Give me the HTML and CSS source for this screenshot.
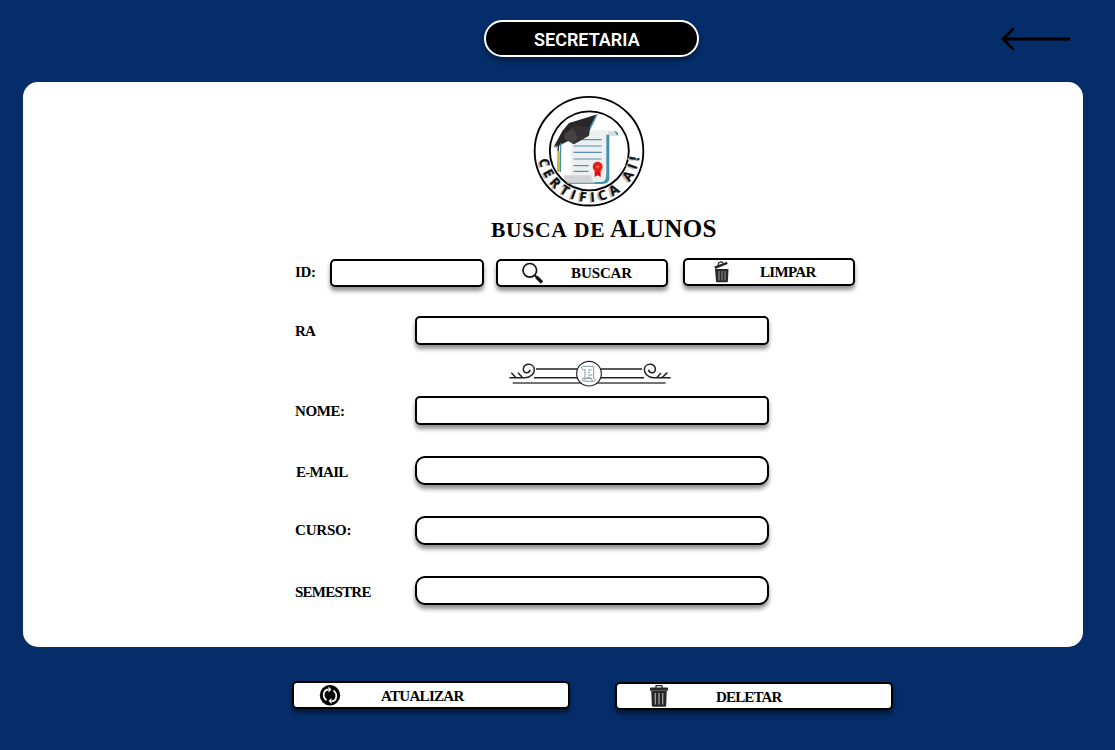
FILE: index.html
```html
<!DOCTYPE html>
<html lang="pt-BR">
<head>
<meta charset="utf-8">
<title>Secretaria - Busca de Alunos</title>
<link rel="stylesheet" href="styles.css">
</head>
<body>
<header class="topbar">
  <div class="pill">SECRETARIA</div>
  <a class="back" aria-label="Voltar"><svg width="70" height="24" viewBox="0 0 70 24"><path d="M69 12H2M12.500 1.500 2 12l10.500 10.500" fill="none" stroke="#000" stroke-width="2.800"/></svg></a>
</header>
<main class="card">
  <svg class="logo" width="130" height="122" viewBox="0 0 390 366">
    <defs><path id="arc" d="M43 184A152 152 0 0 0 347 184"/></defs>
    <circle cx="195" cy="183.500" r="163" fill="#fff" stroke="#000" stroke-width="5.500"/>
    <circle cx="196" cy="182.500" r="118.500" fill="#fff" stroke="#000" stroke-width="5.500"/>
    <path d="M242 124h32q9 2 9 12h-27v130q-2 15-20 15h-25V124z" fill="#4292ac"/>
    <path d="M141 140 160 121h98q16 2 20 13h-31v117q0 25-14 25h-84l-8-18z" fill="#edf0f1"/>
    <path d="M252 124q21 0 26 10h-26z" fill="#d3dde1"/>
    <path d="M119 256h83q-1 19 12 23h-80q-14-3-15-23z" fill="#d2d4d6"/>
    <path d="M130 280h105q14-3 17-17" fill="none" stroke="#4292ac" stroke-width="3"/>
    <path d="M149 149h84M149 168h84M149 187h84M149 207h84M149 227h45M149 244h45" stroke="#5b8eae" stroke-width="3.500"/>
    <path d="M212 238v23l9-5 9 5v-23z" fill="#e00f12"/>
    <circle cx="221" cy="230" r="15" fill="#f1201b"/>
    <circle cx="221" cy="230" r="7.500" fill="#ef5040" stroke="#a90b10" stroke-width="2"/>
    <path d="M92 175 130 106 222 72 198 121z" fill="#4292ac"/>
    <path d="M89 171 115 123 135 99 216 74 194 118 120 158z" fill="#292627"/>
    <path d="m119 132 36-27 43 9-3 23-45 26-27-16z" fill="#343132"/>
    <path d="m121 134 24-19 17 26-15 20-24-14z" fill="#454243"/>
    <path d="m110 160-1 86" stroke="#4292ac" stroke-width="4"/>
    <path d="m104 160-2 24" stroke="#292627" stroke-width="4"/>
    <path d="M100 184h7l1 61h-9z" fill="#c7b64c"/>
    <text class="ring ring-shadow"><textPath href="#arc" startOffset="25" textLength="434">CERTIFICA AI!</textPath></text>
    <text class="ring"><textPath href="#arc" startOffset="25" textLength="434">CERTIFICA AI!</textPath></text>
  </svg>
  <h1 class="title"><span class="small">BUSCA</span><span class="small de">DE</span><span>ALUNOS</span></h1>
  <form class="form">
    <div class="search">
      <label class="label id">ID:</label>
      <input class="field id-field" aria-label="ID">
      <button class="btn find" type="button">
        <svg width="24" height="24" viewBox="0 0 24 24"><circle cx="8.800" cy="9.300" r="6.800" fill="none" stroke="#111" stroke-width="1.700"/><path d="m13.500 14 2.500 2.500" stroke="#111" stroke-width="2"/><path d="m15.500 16 5.500 5.500" stroke="#111" stroke-width="3.400"/></svg>
        <span class="t-buscar">BUSCAR</span>
      </button>
      <button class="btn clear" type="button">
        <svg width="16" height="22" viewBox="0 0 16 22"><path d="M1 8h13.500l-.6 12.300q-.1 1-1 1H3q-.9 0-1-1z" fill="#292929"/><path d="m.8 6.700 12.500-4.800" stroke="#292929" stroke-width="2.600"/><path d="m4 4.500.6-2.600 3-1.200 1.600 1.700" fill="none" stroke="#292929" stroke-width="1.200"/><path d="M5 10v9.500M8 10v9.500M11 10v9.500" stroke="#aaa" stroke-width=".9"/></svg>
        <span class="t-limpar">LIMPAR</span>
      </button>
    </div>
    <div class="row ra"><label class="label">RA</label><input class="field" aria-label="RA"></div>
    <svg class="divider" width="180" height="40" viewBox="0 0 540 120">
      <g fill="none" stroke="#222" stroke-width="4.500">
        <path d="M108 51h124M302 51h124M102 77h130M302 77h130"/>
        <path d="M28 77h47c18 0 28-13 28-24 0-21-33-21-33-2 0 15 19 14 20 2M48 77 34 62M68 77 54 62"/>
        <path d="M512 77h-51c-18 0-28-13-28-24 0-21 33-21 33-2 0 15-19 14-20 2M470 77l13-14M486 77l16-15"/>
        <path d="M38 93h459" stroke="#444"/>
        <circle cx="267" cy="65" r="37" fill="#fff" stroke-width="3.500"/>
      </g>
      <g fill="none" stroke="#8796a5" stroke-width="3"><path d="M255 43h26v38M255 43c-14-2-13 12 0 9v34M285 80q4 8-4 8h-28q-8-2-5-9h26q0 7 5 8M264 54h11M264 61h6M264 69h13M261 76h11"/></g>
    </svg>
    <div class="row nome"><label class="label">NOME:</label><input class="field" aria-label="Nome"></div>
    <div class="row email"><label class="label">E-MAIL</label><input class="field round" aria-label="E-mail"></div>
    <div class="row curso"><label class="label">CURSO:</label><input class="field round" aria-label="Curso"></div>
    <div class="row semestre"><label class="label">SEMESTRE</label><input class="field round" aria-label="Semestre"></div>
  </form>
</main>
<footer class="actions">
  <button class="btn update" type="button">
    <svg width="22" height="22" viewBox="0 0 22 22"><circle cx="11" cy="11.300" r="10.200" fill="#000"/><path d="M9.500 5.300C3.700 6 3.300 13 7.600 16.200M12.500 17.300c5.800-.7 6.200-7.700 1.900-10.900" fill="none" stroke="#fff" stroke-width="1.700"/><path d="m9.500 2.500 3 3-3 3zM12.500 20l-3-3 3-3z" fill="#fff"/></svg>
    <span class="t-atualizar">ATUALIZAR</span>
  </button>
  <button class="btn delete" type="button">
    <svg width="18" height="22" viewBox="0 0 18 22"><path d="M6 3V1q0-.5.500-.5h5q.500 0 .500.500v2" fill="none" stroke="#292929" stroke-width="1.300"/><path d="M0 3.500q0-1 1-1h16q1 0 1 1v2.200H0zM1.300 6h15.400l-.5 14.500q-.1 1.300-1.300 1.300H3.100Q1.900 21.800 1.800 20.500z" fill="#292929"/><path d="M5.300 8v11.500M9 8v11.500M12.700 8v11.500" stroke="#aaa" stroke-width="1.200"/></svg>
    <span class="t-deletar">DELETAR</span>
  </button>
</footer>
</body>
</html>
```

FILE: styles.css
```css
* { box-sizing: border-box; }
body {
  margin: 0;
  width: 1115px;
  height: 750px;
  overflow: hidden;
  background: #042d69;
  font-family: "Liberation Serif", serif;
  font-weight: bold;
  color: #000;
}
svg { display: block; flex: none; }
.topbar { display: flex; height: 82px; padding: 20px 44px 0 484px; justify-content: space-between; }
.pill {
  width: 215px;
  height: 37px;
  border: 2px solid #fff;
  border-radius: 19px;
  background: #000;
  color: #fff;
  font: 600 18px/35px Roboto, sans-serif;
  padding-left: 48px;
  box-shadow: 0 4px 4px rgba(0, 0, 0, .3);
}
.back { padding-top: 7px; }
.card { width: 1060px; height: 565px; margin-left: 23px; padding: 8px 0 0; border-radius: 15px; background: #fff; }
.logo { margin-left: 501px; }
.ring { font: bold 40px "Open Sans", sans-serif; fill: #111; stroke: #111; stroke-width: .8px; }
.ring-shadow { fill: #bbb; stroke: none; transform: translate(-6px, 3px); }
.title { display: flex; align-items: baseline; margin: -1px 0 2px 468px; height: 35px; font-size: 25px; line-height: 35px; letter-spacing: .45px; }
.title .small { font-size: 21.5px; letter-spacing: .7px; width: 83px; }
.title .de { width: 36px; }
.form { padding: 10px 0 0 272px; }
.search { display: flex; align-items: flex-start; height: 58px; padding-top: 1px; }
.label { width: 120px; font-size: 15px; line-height: 17px; letter-spacing: -.45px; }
.id { width: 35px; padding-top: 5px; letter-spacing: -.3px; }
.field {
  width: 354px;
  height: 29px;
  margin: 0;
  padding: 0 8px;
  border: 2px solid #000;
  border-radius: 5px;
  background: #fff;
  box-shadow: 0 4px 4px rgba(0, 0, 0, .43);
}
.id-field { width: 154px; height: 28px; }
.round { border-radius: 10px; }
.row { display: flex; height: 60px; }
.ra { height: 36px; }
.ra .label { padding-top: 7px; letter-spacing: -.8px; }
.nome .label { padding-top: 7px; letter-spacing: -.4px; }
.email .label { padding: 8px 0 0 1px; letter-spacing: -.7px; }
.curso .label { padding-top: 6px; letter-spacing: -.2px; }
.semestre .label { padding-top: 8px; letter-spacing: -.75px; }
.divider { margin: 0 0 4px 205px; }
.btn {
  display: flex;
  align-items: center;
  height: 28px;
  padding: 0;
  border: 2px solid #000;
  border-radius: 5px;
  background: #fff;
  color: #000;
  font: bold 15px/17px "Liberation Serif", serif;
  box-shadow: 0 4px 4px rgba(0, 0, 0, .43);
}
.find { width: 172px; margin-left: 12px; padding-left: 23px; }
.clear { width: 172px; margin: -1px 0 0 15px; padding-left: 29px; }
.t-buscar { margin-left: 26px; letter-spacing: -.1px; }
.t-limpar { margin-left: 30px; letter-spacing: -.7px; }
.actions { display: flex; padding: 34px 0 0 292px; }
.update { width: 278px; padding-left: 25px; }
.delete { width: 278px; margin: 1px 0 0 45px; padding-left: 33px; }
.t-atualizar { margin-left: 40px; padding-top: 2px; letter-spacing: -.7px; }
.t-deletar { margin-left: 48px; padding-top: 2px; letter-spacing: -.85px; }
```
